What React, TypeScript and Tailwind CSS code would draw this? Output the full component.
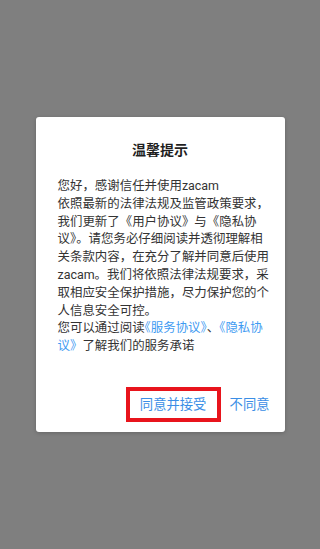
export default function App() {
  return (
    <div className="w-[320px] h-[549px] bg-[#7f7f7f] flex items-center justify-center font-['Roboto','Noto_Sans_CJK_SC',sans-serif]">
      <div className="w-[249px] bg-white rounded-[3px] pt-[23px] pb-[10px] shadow-[0_1px_4px_rgba(0,0,0,0.2)]">
        <h2 className="text-center text-[14px] leading-[20px] font-bold text-[#1f1f1f]">温馨提示</h2>

        <p className="mt-[17px] ml-[22px] mr-[12px] text-[12.44px] leading-[17.8px] text-[#333333]">
          您好，感谢信任并使用zacam
          <br />
          依照最新的法律法规及监管政策要求，我们更新了《用户协议》与《隐私协议》。请您务必仔细阅读并透彻理解相关条款内容，在充分了解并同意后使用zacam。我们将依照法律法规要求，采取相应安全保护措施，尽力保护您的个人信息安全可控。
          <br />
          您可以通过阅读
          <span className="text-[#3f9bf2] [font-feature-settings:'halt']">《服务协议》</span>
          、
          <span className="text-[#3f9bf2]">《隐私协议》</span>
          了解我们的服务承诺
        </p>

        <div className="mt-[32px] flex items-center justify-end pr-[15px]">
          <button className="w-[95px] h-[35px] border-[4px] border-[#e8141c] text-[13.3px] text-[#3a8ee6] flex items-center justify-center">
            同意并接受
          </button>
          <button className="ml-[9px] text-[13.3px] text-[#3a8ee6]">不同意</button>
        </div>
      </div>
    </div>
  );
}
